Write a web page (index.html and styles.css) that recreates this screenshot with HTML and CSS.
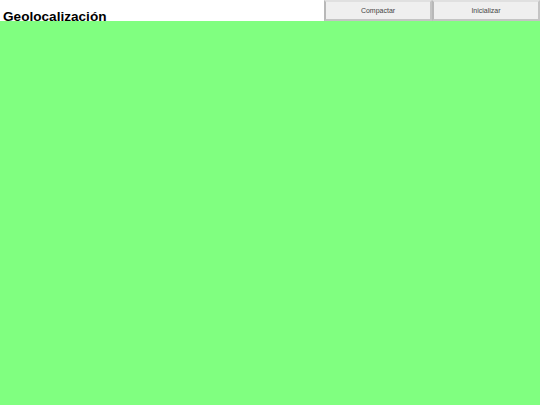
FILE: index.html
```html
<!DOCTYPE html>
<html lang="es">
<head>
<meta charset="utf-8">
<title>Geolocalización</title>
<link rel="stylesheet" href="styles.css">
</head>
<body>
<div class="app">
  <header class="topbar">
    <h1 class="title">Geolocalización</h1>
    <div class="actions">
      <button class="btn" type="button">Compactar</button>
      <button class="btn" type="button">Inicializar</button>
    </div>
  </header>
  <main class="map"></main>
</div>
</body>
</html>
```
FILE: styles.css
```css
html, body {
  margin: 0;
  padding: 0;
  height: 100%;
  background: #ffffff;
}
.app {
  display: flex;
  flex-direction: column;
  height: 100%;
}
.topbar {
  display: flex;
  align-items: flex-start;
  justify-content: space-between;
  height: 21px;
}
.title {
  margin: 0;
  padding: 9px 0 0 3px;
  font-family: "Liberation Sans", Arial, sans-serif;
  font-weight: bold;
  font-size: 13.6px;
  line-height: 16px;
  color: #000;
  white-space: nowrap;
}
.actions {
  display: flex;
  width: 216px;
}
.btn {
  width: 108px;
  height: 21px;
  margin: 0;
  padding: 0;
  background: #efefef;
  border: 2px solid #c4c4c4;
  border-top-color: #e0e0e0;
  border-left-color: #b8b8b8;
  font-family: "Liberation Sans", Arial, sans-serif;
  font-size: 7px;
  color: #444;
}
.map {
  position: relative;
  flex: 1;
  background: #80ff80;
}
```
